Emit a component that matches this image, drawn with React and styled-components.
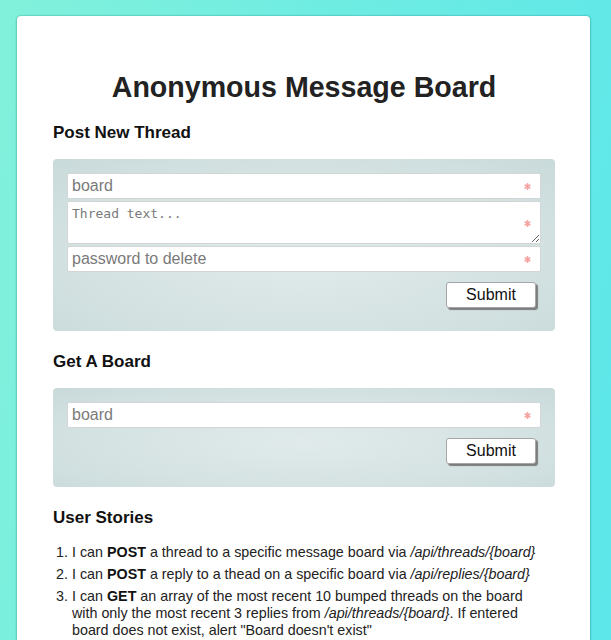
import React from "react";
import styled, { createGlobalStyle } from "styled-components";

const Global = createGlobalStyle`
  html, body { margin: 0; padding: 0; }
  body {
    min-height: 640px;
    background: linear-gradient(100deg, #82f1db 0%, #6eece2 45%, #5be6ea 100%);
    font-family: "Liberation Sans", Arial, sans-serif;
    color: #222;
  }
`;

const Page = styled.div`
  padding: 16px 21px 0 17px;
`;

const Card = styled.main`
  background: #fff;
  border-radius: 4px;
  box-shadow: 0 0 2px rgba(0, 90, 90, 0.55), 0 1px 3px rgba(0, 80, 80, 0.2);
  padding: 53px 35px 40px 36px;
  min-height: 700px;
`;

const Title = styled.h1`
  margin: 0 0 17px;
  font-size: 28.6px;
  line-height: 36px;
  text-align: center;
  font-weight: bold;
  color: #222;
`;

const SectionTitle = styled.h3`
  margin: ${(p) => (p.$first ? "0" : "20px")} 0 17px;
  font-size: 17px;
  line-height: 20px;
  font-weight: bold;
  color: #111;
  position: relative;
  top: 1px;
`;

const Panel = styled.form`
  display: flex;
  flex-direction: column;
  gap: 2px;
  padding: 14px 14px 23px;
  border-radius: 4px;
  background: radial-gradient(ellipse at 50% 55%, #e0eaea 0%, #d6e3e3 55%, #c9dada 100%);
`;

const Field = styled.div`
  position: relative;
  display: flex;
`;

const Input = styled.input`
  flex: 1;
  box-sizing: border-box;
  height: 26px;
  margin: 0;
  border: 1px solid #d2d6d6;
  border-radius: 2px;
  padding: 0 20px 0 4px;
  background: #fff;
  font-family: "Liberation Sans", Arial, sans-serif;
  font-size: 16px;
  color: #222;
  outline: none;
  &::placeholder { color: #7a7a7a; }
`;

const TextArea = styled.textarea`
  flex: 1;
  box-sizing: border-box;
  height: 43px;
  margin: 0;
  border: 1px solid #d2d6d6;
  border-radius: 2px;
  padding: 4px 20px 0 4px;
  background: #fff;
  font-family: "DejaVu Sans Mono", "Liberation Mono", monospace;
  font-size: 13px;
  color: #222;
  resize: vertical;
  outline: none;
  &::placeholder { color: #7a7a7a; }
`;

const Required = styled.span`
  position: absolute;
  right: 10px;
  top: 50%;
  width: 7px;
  height: 7px;
  margin-top: -3px;
  display: block;
  pointer-events: none;
  & > svg { display: block; }
`;

const Actions = styled.div`
  display: flex;
  justify-content: flex-end;
  padding: 8px 5px 0 0;
`;

const Button = styled.button`
  width: 90px;
  height: 26px;
  box-sizing: border-box;
  background: #fff;
  border: 1px solid #a6a6a6;
  border-radius: 3px;
  box-shadow: 2px 2px 1px #7c7c7c;
  font-family: "Liberation Sans", Arial, sans-serif;
  font-size: 16px;
  color: #111;
  padding: 0;
  cursor: pointer;
`;

const Stories = styled.ol`
  margin: 13px 15px 0 0;
  padding-left: 19px;
  font-size: 14.3px;
  line-height: 17px;
  color: #222;
  & > li { margin-bottom: 5px; }
  & b { color: #111; }
`;

const Star = () => (
  <Required>
    <svg width="7" height="7" viewBox="0 0 7 7">
      <g stroke="#f5a3a3" strokeWidth="1.7" strokeLinecap="round">
        <line x1="3.5" y1="0.8" x2="3.5" y2="6.2" />
        <line x1="1.2" y1="2.1" x2="5.8" y2="4.9" />
        <line x1="1.2" y1="4.9" x2="5.8" y2="2.1" />
      </g>
    </svg>
  </Required>
);

export default function App() {
  return (
    <>
      <Global />
      <Page>
        <Card>
          <Title>Anonymous Message Board</Title>

          <SectionTitle $first>Post New Thread</SectionTitle>
          <Panel onSubmit={(e) => e.preventDefault()}>
            <Field>
              <Input placeholder="board" />
              <Star />
            </Field>
            <Field>
              <TextArea placeholder="Thread text..." />
              <Star />
            </Field>
            <Field>
              <Input type="text" placeholder="password to delete" />
              <Star />
            </Field>
            <Actions>
              <Button type="submit">Submit</Button>
            </Actions>
          </Panel>

          <SectionTitle>Get A Board</SectionTitle>
          <Panel onSubmit={(e) => e.preventDefault()}>
            <Field>
              <Input placeholder="board" />
              <Star />
            </Field>
            <Actions>
              <Button type="submit">Submit</Button>
            </Actions>
          </Panel>

          <SectionTitle>User Stories</SectionTitle>
          <Stories>
            <li>
              I can <b>POST</b> a thread to a specific message board via{" "}
              <i>/api/threads/{"{board}"}</i>
            </li>
            <li>
              I can <b>POST</b> a reply to a thead on a specific board via{" "}
              <i>/api/replies/{"{board}"}</i>
            </li>
            <li>
              I can <b>GET</b> an array of the most recent 10 bumped threads on the
              board with only the most recent 3 replies from{" "}
              <i>/api/threads/{"{board}"}</i>. If entered board does not exist,
              alert "Board doesn't exist"
            </li>
          </Stories>
        </Card>
      </Page>
    </>
  );
}
